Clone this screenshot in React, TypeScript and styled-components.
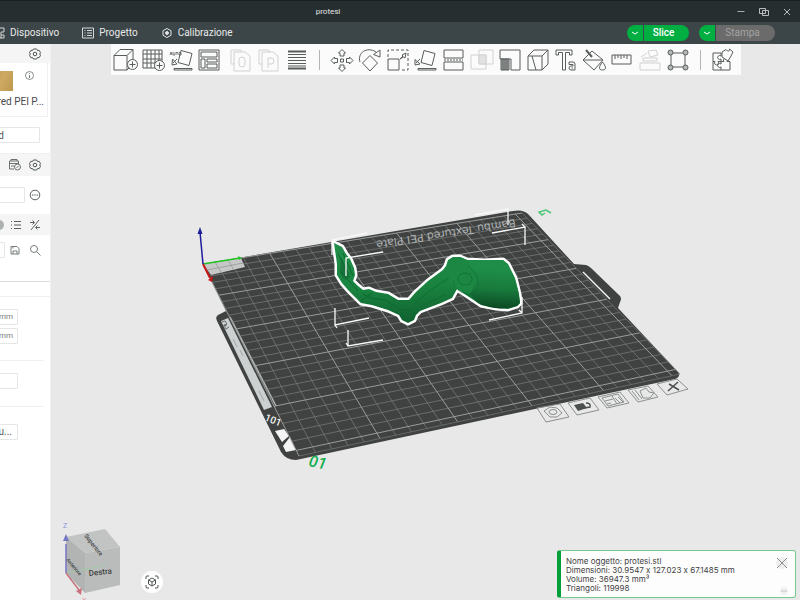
import React from "react";
import styled, { createGlobalStyle } from "styled-components";

const GlobalStyle = createGlobalStyle`
  *, *::before, *::after { box-sizing: border-box; }
  html, body, #root { height: 100%; margin: 0; }
  body { font-family: Roboto, "Noto Sans", sans-serif; font-size: 10px; background: #e8e8e8; overflow: hidden; }
  button, input { font: inherit; color: inherit; }
`;

/* ---------- window chrome ---------- */

const Window = styled.div`
  display: flex;
  flex-direction: column;
  height: 100%;
`;

const TitleBar = styled.header`
  display: flex;
  align-items: center;
  height: 22px;
  background: #262e30;
  border-top: 1px solid #1a2022;
  color: #e4e6e6;
`;

const WindowTitle = styled.h1`
  flex: 1;
  margin: 0;
  font-size: 8px;
  font-weight: 400;
  line-height: 10px;
  text-align: center;
`;

const WindowControls = styled.div`
  display: flex;
  justify-content: flex-end;
  width: 144px;
  padding-right: 2px;
`;

const PlainButton = styled.button<{ $w: number; $faded?: boolean }>`
  display: flex;
  align-items: center;
  justify-content: center;
  flex: none;
  width: ${(p) => p.$w}px;
  padding: 0;
  border: 0;
  background: none;
  opacity: ${(p) => (p.$faded ? 0.25 : 1)};
`;

const TabBar = styled.div`
  display: flex;
  align-items: center;
  justify-content: space-between;
  height: 22px;
  background: #3c4547;
  color: #e8eaea;
`;

const Tabs = styled.nav`
  display: flex;
  gap: 23px;
  margin-left: -7px;
`;

const Tab = styled.button`
  display: flex;
  align-items: center;
  gap: 5px;
  padding: 0;
  border: 0;
  background: none;
  font-size: 10px;
  line-height: 14px;
  white-space: nowrap;
`;

const Actions = styled.div`
  display: flex;
  gap: 10px;
  padding-right: 25px;
`;

const SplitButton = styled.div`
  display: flex;
  gap: 1px;
  height: 16px;
`;

const SplitArrow = styled.button`
  display: flex;
  align-items: center;
  justify-content: center;
  width: 16px;
  padding: 0;
  border: 0;
  border-radius: 8px 0 0 8px;
  background: #00ae42;
`;

const SplitMain = styled.button<{ $disabledLook?: boolean }>`
  width: ${(p) => (p.$disabledLook ? 59 : 45)}px;
  padding: 0 6px 0 0;
  border: 0;
  border-radius: 0 8px 8px 0;
  background: ${(p) => (p.$disabledLook ? "#6b6b6b" : "#00ae42")};
  color: ${(p) => (p.$disabledLook ? "#a5a5a5" : "#ffffff")};
  font-size: 10px;
  font-weight: ${(p) => (p.$disabledLook ? 400 : 500)};
  line-height: 16px;
`;

const Body = styled.div`
  display: flex;
  flex: 1;
  min-height: 0;
`;

/* ---------- sidebar ---------- */

const Sidebar = styled.aside`
  display: flex;
  flex-direction: column;
  flex: none;
  width: 51px;
  overflow: hidden;
  background: #ffffff;
  border-right: 1px solid #f1f1f1;
  color: #4a4a4a;
`;

const SectionHead = styled.div<{ $h: number }>`
  display: flex;
  align-items: center;
  justify-content: flex-end;
  flex: none;
  height: ${(p) => p.$h}px;
  padding-right: 5px;
  background: #f5f5f5;
`;

const PlateCard = styled.section`
  display: flex;
  flex-direction: column;
  align-items: flex-end;
  flex: none;
  height: 54px;
  margin-right: 2px;
  padding: 8px 3px 0 0;
  border-right: 1px solid #f0f0f0;
  border-bottom: 1px solid #f0f0f0;
`;

const PlateTop = styled.div`
  display: flex;
  align-items: flex-start;
  gap: 12px;
  height: 21px;
  padding-right: 10px;
`;

const PlateSwatch = styled.div`
  width: 30px;
  height: 20px;
  background: linear-gradient(115deg, #b9954c, #cda961 60%, #bd984f);
`;

const PlateName = styled.div`
  margin-top: 3px;
  font-size: 10px;
  line-height: 14px;
  white-space: nowrap;
`;

const Row = styled.div<{ $h: number; $right: number; $line?: string }>`
  display: flex;
  align-items: center;
  justify-content: flex-end;
  flex: none;
  height: ${(p) => p.$h}px;
  padding-right: ${(p) => p.$right}px;
  border-bottom: ${(p) => (p.$line ? `1px solid ${p.$line}` : "0")};
`;

const Field = styled.label`
  display: flex;
  align-items: center;
  justify-content: flex-end;
  flex: none;
  width: 120px;
  height: 16px;
  padding-right: 4px;
  border: 1px solid #e6e6e6;
  border-radius: 1px;
  background: #ffffff;
  color: #7a7a7a;
  font-size: 8px;
`;

const FieldInput = styled.input<{ $end?: number }>`
  flex: 1;
  min-width: 0;
  height: 12px;
  padding: 0 ${(p) => p.$end ?? 0}px 0 0;
  border: 0;
  outline: 0;
  background: none;
  color: #555555;
  font-size: 10px;
  text-align: right;
`;

const Rule = styled.hr`
  flex: none;
  width: auto;
  height: 1px;
  margin: 0 6px 0 0;
  border: 0;
  background: #f0f0f0;
`;

const FieldStack = styled.div<{ $h: number }>`
  display: flex;
  flex-direction: column;
  align-items: flex-end;
  justify-content: center;
  gap: 3px;
  flex: none;
  height: ${(p) => p.$h}px;
  padding: 0 32px 5px 0;
`;

/* ---------- 3D view ---------- */

const View = styled.main`
  position: relative;
  flex: 1;
  min-width: 0;
  background: #e8e8e8;
`;

const Scene = styled.svg`
  display: block;
  width: 100%;
  height: 100%;
`;

const Toolbar = styled.div`
  position: absolute;
  top: 0;
  left: 50%;
  transform: translateX(-50%);
  display: flex;
  align-items: center;
  height: 31px;
  padding: 0 4px 0 0;
  background: #fbfbfb;
`;

const ToolGroup = styled.div<{ $before?: number }>`
  display: flex;
  margin-left: ${(p) => p.$before ?? 0}px;
`;

const Separator = styled.span`
  width: 1px;
  height: 20px;
  margin: 0 8px;
  background: #b2b5b5;
`;

const CornerButton = styled.button`
  position: absolute;
  left: 90px;
  bottom: 7px;
  display: flex;
  align-items: center;
  justify-content: center;
  width: 22px;
  height: 22px;
  padding: 0;
  border: 0;
  border-radius: 11px;
  background: #ffffff;
`;

const Notice = styled.section`
  position: absolute;
  right: 4px;
  bottom: 2px;
  display: flex;
  justify-content: space-between;
  width: 239px;
  height: 48px;
  padding: 6px 7px 2px 5px;
  border: 1px solid #74c98c;
  border-left: 4px solid #009f38;
  border-radius: 3px;
  background: #fdfdfd;
  color: #3f3f3f;
  font-family: Inter, "Noto Sans", sans-serif;
  font-feature-settings: "calt" 0;
  font-size: 8px;
  line-height: 9px;
`;

const NoticeText = styled.p`
  margin: 0;
  white-space: nowrap;
`;

const NoticeTools = styled.div`
  display: flex;
  flex-direction: column;
  justify-content: space-between;
  align-items: flex-end;
`;

/* ---------- small icons ---------- */

type IconProps = { size?: number; color?: string; children: React.ReactNode };

const Icon = ({ size = 12, color = "#5a5f5f", children }: IconProps) => (
  <svg width={size} height={size} viewBox={`0 0 ${size} ${size}`} fill="none" stroke={color} strokeWidth={1} aria-hidden="true">
    {children}
  </svg>
);

const Gear = () => (
  <Icon color="#4f5656">
    <path d="M4.400 1h3.200l.8 1.400h1.800l1.300 2.300-.8 1.300.8 1.300-1.300 2.300H8.400L7.600 11H4.400l-.8-1.400H1.800L.5 7.300 1.300 6 .5 4.700l1.300-2.300h1.800z" />
    <circle cx="6" cy="6" r="1.800" />
  </Icon>
);

/* ---------- toolbar icons, drawn on a 28 x 28 field ---------- */

const tools: Record<string, React.ReactNode> = {
  add: <><path d="M3 9.500h13V24H3zM3 9.500l6-6h13l-6 6M22 3.500V14M16 24l2-2" /><circle cx="21.500" cy="18.500" r="5" fill="#fbfbfb" /><path d="M21.500 15.500v6M18.500 18.500h6" /></>,
  addPlate: <><path d="M4 4h19v18H4zM8 4v18M12 4v18M16 4v18M20 4v18M4 8h19M4 13h19M4 17h19" /><circle cx="20.500" cy="19.500" r="5" fill="#fbfbfb" /><path d="M20.500 16.500v6M17.500 19.500h6" /></>,
  autoOrient: <><path d="m14 4.500 11 3-3 12-11-3zM7 22.500h18v1.500H7zM10 13l-4 4m-.5-4L5 19l5-1z" /><path d="M3 9l1-3 1 3m1-3v3h2V6m1 .5h2m-1 0v2.500m2-2.500h2V9h-2z" strokeWidth="0.800" /></>,
  arrange: <><path d="M4 4h20v20H4zM6 6h16v5H6zM6 13h4v9H6zM12 13h10v3H12zM12 18h10v4H12z" /></>,
  pageO: <><path d="M8 18H4V4h10v2M7 6h11l5 4v15H7z" /><rect x="12" y="11" width="6" height="10" rx="3" /></>,
  pageP: <><path d="M8 18H4V4h10v2M7 6h11l5 4v15H7z" /><path d="M13 22V12h3a2.500 2.500 0 0 1 0 6h-3" /></>,
  layers: <><path d="M5 5.500h18M5 22.500h18" strokeWidth="2" /><path d="M5 8.500h18M5 11.500h18M5 14.500h18M5 17.500h18M5 20h18" strokeWidth="1.200" /></>,
  move: <><path d="M12.500 13h3v3h-3zM14 3.500l3.500 3.500H16v3h-4V7h-1.500zM14 25.500l3.500-3.500H16v-3h-4v3h-1.500zM3 14.500 6.500 11v1.500h3v4h-3V18zM25 14.500 21.500 11v1.500h-3v4h3V18z" /></>,
  rotate: <><path d="m14 9.500 7.500 7.500-7.500 8-7.500-8zM4 16C1 7 11 0 20 6M17.500 8.500 24 11V4z" /></>,
  scale: <><path d="M4 13h11v11H4z" /><path d="M4 11V4h20v20h-7" strokeDasharray="3 2" /><path d="m16 13 3-3-1-1 4-2-1 5-1.500-1z" /></>,
  layFace: <><path d="m12 4.500 11 3-3 12-11-3zM6 22.500h18v1.500H6zM8 13l-4 4m-1-3.500L3 19l5-1z" /></>,
  cut: <><path d="M4 4h19v8H4zM4 16h19v8H4z" /><path d="M4 14h19" strokeDasharray="2 1" /></>,
  boolean: <><path d="M3 9h15v14H3zM11 4h14v14H11z" /><path d="M11 9h7v9h-7z" fill="#9a9c9c" /></>,
  support: <><path d="M4 4h20v20h-9V13H4z" /><path d="M5 13h8v11H5z" fill="#a1a4a4" /><path d="M7 13v11M9 13v11M11 13v11" /></>,
  seam: <><path d="M4 10h14v14H4zM4 10l6-6h14v14l-6 6M18 10l6-6M8 10l4 14" /></>,
  text: <><path d="M4 4h16v5h-2.500V6.500h-4V24h-3V6.500h-4V9H4zM17 16h4q2 0 2 2v6h-4q-2 0-2-2t2-2h2v-1.500h-4z" /><path d="M19.500 22h1.500" /></>,
  paint: <><path d="m12 5 11 9-9 10L3 14zM3 14h20" /><path d="m6 4 6 7" strokeWidth="2" /><path d="M22.500 16c-4 5-4 8 0 8s4-3 0-8z" fill="#fbfbfb" /></>,
  measure: <><path d="M4 9h19v9H4zM7 9v4M10 9v3M13 9v4M16 9v3M19 9v4" /></>,
  assemble: <><path d="M4 17h20v7H4zM7 12h14v3H7zM12 5l8-1 2 5-8 2zM5 11l6-4" /></>,
  bounds: <><path d="M7 7h14v14H7z" />{[[6.5, 6.5], [21.5, 6.5], [6.5, 21.5], [21.5, 21.5]].map(([x, y]) => <circle key={`${x}-${y}`} cx={x} cy={y} r="2.500" fill="#b4b7b7" />)}</>,
  puzzle: <><path d="M4 7h8v3a2 2 0 1 0 0 3v2.500H9a2 2 0 1 1-3 0H4zM4 15.500V24h8v-3a2 2 0 1 1 0-3v-2.500M12 24h9v-8.500h-3a2 2 0 1 0-3 0h-3" /><path d="m13 6 4-2.500 1.500 1.500a1.500 1.500 0 0 0 2-2L24 6l-2 4-3 5-6-4z" fill="#fbfbfb" /></>,
};

const Tool = ({ id, label, faded }: { id: string; label: string; faded?: boolean }) => (
  <PlainButton $w={28} $faded={faded} aria-label={label}>
    <Icon size={28} color="#585d5d">{tools[id]}</Icon>
  </PlainButton>
);

/* ---------- build plate projection ---------- */

type Pt = [number, number];
const P = 256;
const corners: Pt[] = [[203, 264], [522, 213], [680, 374], [299, 456]];

/** Maps plate millimetres (u to the right, v to the front) to scene coordinates. */
function project(mmU: number, mmV: number): Pt {
  const [[x0, y0], [x1, y1], [x2, y2], [x3, y3]] = corners;
  const dx1 = x1 - x2, dx2 = x3 - x2, sx = x0 - x1 + x2 - x3;
  const dy1 = y1 - y2, dy2 = y3 - y2, sy = y0 - y1 + y2 - y3;
  const det = dx1 * dy2 - dx2 * dy1;
  const g = (sx * dy2 - dx2 * sy) / det;
  const h = (dx1 * sy - sx * dy1) / det;
  const u = mmU / P, v = mmV / P;
  const k = g * u + h * v + 1;
  return [
    ((x1 - x0 + g * x1) * u + (x3 - x0 + h * x3) * v + x0) / k,
    ((y1 - y0 + g * y1) * u + (y3 - y0 + h * y3) * v + y0) / k,
  ];
}

const segment = (a: Pt, b: Pt) => `M${a[0].toFixed(2)} ${a[1].toFixed(2)}L${b[0].toFixed(2)} ${b[1].toFixed(2)}`;

const gridPath = (major: boolean) => {
  const out: string[] = [];
  for (let t = 0; t <= 250; t += 10) {
    if ((t % 50 === 0) !== major) continue;
    out.push(segment(project(t, 0), project(t, P)), segment(project(0, t), project(P, t)));
  }
  return out.join("");
};

const ARM =
  "M334 243L342 247L346 254L350 259L354 268L355 275L353 281L358 286L363 290L369 289L376 292L388 294L398 300L409 300L416 292L428 281L443 270L446 266L448 260L453 257L460 257L467 260L484 261L503 260L508 264L515 278L519 294L520 303L517 306L508 309L496 308L481 305L469 297L457 289L452 298L441 303L420 311L416 315L414 320L408 323L402 320L399 315L388 310L372 305L361 303L356 298L349 291L342 283L337 275L337 264L336 257Z";

const PlateScene = () => (
  <Scene viewBox="51 44 749 556" preserveAspectRatio="xMidYMid meet" role="img" aria-label="protesi.stl">
    <defs>
      <linearGradient id="arm" x1="0" y1="0" x2="0.150" y2="1">
        <stop offset="0.150" stopColor="#1f8d48" />
        <stop offset="0.600" stopColor="#19833f" />
        <stop offset="1" stopColor="#126331" />
      </linearGradient>
      <linearGradient id="socket" x1="0.500" y1="0" x2="0.450" y2="1">
        <stop offset="0.200" stopColor="#1e8d48" />
        <stop offset="0.600" stopColor="#187a3c" />
        <stop offset="1" stopColor="#0b4722" />
      </linearGradient>
    </defs>

    {/* plate body with its two handles */}
    <path
      fill="#3f4241"
      d="M203 264L513 211Q524 209 529 215L574 264L586 265Q589 266 591 268L620 296Q622 299 620 302L618 308L678 372Q681 377 675 379L296 460Q286 460 281 452L217 321Q215 317 218 315L226 311Z"
    />
    <path d="M583 272L610 299" stroke="#f3f3f3" strokeWidth="1.500" />
    <path d="M221 321L228 318L272 407L264 410Z" fill="#cdd0d0" />
    <path d="M230 317L276 406" stroke="#b5b8b8" strokeWidth="1.500" />
    <path d="M233 339l4 8m3 3 3 6M259 391l5 10" stroke="#a4a7a7" strokeWidth="1" fill="none" />
    <path d="M222 322l3-1 2 3-3 1 2 4 3-2M223 326l4-1" stroke="#6b6e6e" fill="none" />
    <text x="264" y="420" transform="rotate(22 264 420)" fill="#f2f2f2" fontSize="10" fontWeight="500">101</text>
    <path d="M275 431L284 429L289 436L282 442ZM283 446L290 437L296 450L286 452Z" fill="#f4f4f4" />

    {/* grid */}
    <path d={gridPath(false)} stroke="#7b7e7d" strokeWidth="0.700" />
    <path d={gridPath(true)} stroke="#999c9b" strokeWidth="1" />
    <path d={segment(project(0, P), project(P, P)) + segment(project(P, 0), project(P, P))} stroke="#767978" strokeWidth="0.700" />
    <path d="M203 264L241 258L245 267L211 275Z" fill="#c6c8c8" />
    <path d="M207 270L243 263M215 262L221 272M228 260L234 270" stroke="#a0a3a3" />

    {/* lettering along the far edge, seen from behind */}
    <text x="515" y="219" transform="rotate(171 515 219)" fill="#aeb1b1" fontSize="11" fontFamily='"DejaVu Sans", sans-serif'>
      Bambu Textured PEI Plate
    </text>

    {/* origin axes */}
    <path d="M203 264L240 258" stroke="#21c321" strokeWidth="1.500" />
    <path d="M238 256L242 258L239 260Z" fill="#21c321" />
    <path d="M203 264L210 278" stroke="#c81616" strokeWidth="2" />
    <path d="M208 280L213 276L212 282Z" fill="#c81616" />
    <path d="M203 264L200 232" stroke="#1c1c9c" strokeWidth="1.500" />
    <path d="M197.500 234L200 227L202.500 234Z" fill="#1c1c9c" />

    {/* model */}
    <path d={ARM} fill="url(#arm)" stroke="#ffffff" strokeWidth="5" strokeLinejoin="round" />
    <path d={ARM} fill="url(#arm)" />
    <path d="M467 260L503 260Q517 274 520 303L517 306Q496 312 478 303L465 290Q472 281 467 260Z" fill="url(#socket)" />
    <path d="M448 262L453 257L460 257L467 260L478 279L470 294L457 289L448 281Z" fill="#1c8743" />
    <g fill="none" stroke="#0c6930" strokeWidth="1">
      <ellipse cx="465" cy="279" rx="7" ry="6" strokeOpacity="0.700" />
      <path d="M453 281Q455 292 467 294T478 281Q477 272 468 266" strokeOpacity="0.500" />
      <path d="M363 294L371 298L385 300L401 310M372 293L361 301M338 254L349 274M343 253L353 276M341 272L358 291" />
      <ellipse cx="408" cy="315" rx="6" ry="5" />
      <path d="M414 304L432 289L449 278M420 307L446 294M402 309L412 311" strokeOpacity="0.700" />
    </g>
    <path d="M341 257L350 277L345 280L340 273Z" fill="#106231" opacity="0.600" />

    {/* selection brackets */}
    <path
      fill="none"
      stroke="#f8f8f8"
      strokeWidth="1.300"
      d="M332 255V240L367 233M383 252L346 258V276M335 308V325L369 318M348 330V346L383 340M335 325l2 3M348 346l-2-3M475 215L508 209V225M492 233L525 227V245M525 227l-3-3M489 320L522 313V297M522 313l-3-3"
    />

    {/* plate number and edit mark */}
    <text x="308" y="466" transform="rotate(12 308 466)" fill="#12ad4d" fontSize="16" fontWeight="500" fontStyle="italic">
      01
    </text>
    <path d="M551 213L546 210L539 212L542 215L545 213" fill="none" stroke="#4bc676" strokeWidth="1.500" />

    {/* plate actions */}
    <g fill="none" stroke="#8d9090" strokeWidth="1">
      <path d="M537 408L560 404L569 417L546 422ZM568 403L590 398L599 410L577 415ZM598 397L620 392L629 403L607 408ZM628 390L648 386L658 397L638 402ZM657 384L677 379L688 389L667 395Z" />
      <path d="M544 411L550 407L557 408L562 413L557 417L550 417Z" />
      <ellipse cx="553" cy="412" rx="4" ry="2.500" />
      <path d="M602 398L618 394L624 402L608 406ZM605 401L613 399M607 404L611 403M612 396L617 404M615 398L620 403M618 397L623 402" />
      <path d="M632 391L639 400M635 390L642 399M640 391L646 388L649 392L654 393L650 398L643 398Z" />
    </g>
    <path d="M574 405L583 403L587 408L578 411Z" fill="#4c4f4f" />
    <path d="M584 408L590 407Q591 403 586 403M669 384L679 390M678 382L668 391" fill="none" stroke="#4c4f4f" strokeWidth="1.500" />

    {/* orientation cube */}
    <path d="M66 537L105 529L120 547L85 553Z" fill="#c1c4c3" />
    <path d="M66 537L85 553V593L66 573Z" fill="#b1b4b3" />
    <path d="M85 553L120 547V585L85 593Z" fill="#b9bcbb" />
    <path d="M66 573L107 565" stroke="#a3c9a8" />
    <path d="M66 573V544" stroke="#7476c6" strokeWidth="1.500" />
    <path d="M63 541L66 534L69 541Z" fill="#7476c6" />
    <path d="M66 573L79 590" stroke="#c9727d" strokeWidth="1.500" />
    <path d="M76 591L82 588L81 595Z" fill="#c9727d" />
    <g fill="#3e4141">
      <text x="89" y="576" fontSize="8" fontWeight="500" transform="rotate(-6 89 576)">Destra</text>
      <text x="84" y="536" fontSize="6" fontWeight="500" transform="rotate(52 84 536)">Superiore</text>
      <text x="66" y="560" fontSize="5" fontWeight="500" transform="rotate(50 66 560)">Anteriore</text>
      <text x="63" y="528" fontSize="7" fill="#8e8fe0">Z</text>
      <text x="82" y="603" fontSize="7" fill="#dd8c98">X</text>
    </g>
  </Scene>
);

export default function App() {
  return (
    <>
      <GlobalStyle />
      <Window>
        <TitleBar>
          <WindowTitle>protesi</WindowTitle>
          <WindowControls>
            <PlainButton $w={23} aria-label="Riduci a icona">
              <Icon color="#a9adad"><path d="M2.500 5.500h7" /></Icon>
            </PlainButton>
            <PlainButton $w={23} aria-label="Ripristina">
              <Icon color="#b9bdbd"><path d="M1.500 2.500h6v5h-6zM4.500 4.500h6v5h-6z" /></Icon>
            </PlainButton>
            <PlainButton $w={23} aria-label="Chiudi">
              <Icon color="#b9bdbd"><path d="m3 3 6 6M9 3 3 9" /></Icon>
            </PlainButton>
          </WindowControls>
        </TitleBar>

        <TabBar>
          <Tabs>
            <Tab>
              <Icon color="#d5d8d8"><path d="M1 1h10v4H8v3h3v3H1zM8 8v3" /></Icon>
              Dispositivo
            </Tab>
            <Tab>
              <Icon color="#d5d8d8"><path d="M.5 1h11v10H.5zM2.500 3.500h1M5 3.500h5M2.500 6h1M5 6h5M2.500 8.500h1M5 8.500h5" /></Icon>
              Progetto
            </Tab>
            <Tab>
              <Icon color="#e2e4e4"><path d="m6 1.500 4 2.200v4.600l-4 2.200-4-2.200V3.700z" /><circle cx="6" cy="6" r="1.500" fill="#e2e4e4" /></Icon>
              Calibrazione
            </Tab>
          </Tabs>
          <Actions>
            <SplitButton>
              <SplitArrow aria-label="Opzioni slice"><Icon size={8} color="#ffffff"><path d="m1 3 3 2 3-2" /></Icon></SplitArrow>
              <SplitMain>Slice</SplitMain>
            </SplitButton>
            <SplitButton>
              <SplitArrow aria-label="Opzioni stampa"><Icon size={8} color="#ffffff"><path d="m1 3 3 2 3-2" /></Icon></SplitArrow>
              <SplitMain $disabledLook>Stampa</SplitMain>
            </SplitButton>
          </Actions>
        </TabBar>

        <Body>
          <Sidebar>
            <SectionHead $h={19}>
              <PlainButton $w={20} aria-label="Impostazioni stampante"><Gear /></PlainButton>
            </SectionHead>
            <PlateCard>
              <PlateTop>
                <PlateSwatch />
                <PlainButton $w={9} aria-label="Informazioni piatto">
                  <Icon size={9}><circle cx="4.500" cy="4.500" r="4" strokeWidth="0.700" /><path d="M4.500 4v3M4.500 2v1" strokeWidth="0.800" /></Icon>
                </PlainButton>
              </PlateTop>
              <PlateName>Textured PEI P...</PlateName>
            </PlateCard>
            <Row $h={37} $right={10} $line="#f0f0f0">
              <Field><FieldInput $end={31} aria-label="Ugello" defaultValue="Standard" /></Field>
            </Row>
            <SectionHead $h={22}>
              <PlainButton $w={20} aria-label="Filamenti">
                <Icon color="#6a6f6f"><path d="M.5 2h9v3M.5 2v8H5M.5 4.500h9M2 7h3M2 2V.5h6V2" /><circle cx="8.500" cy="8" r="3" /><path d="m7.500 9 2-2" /></Icon>
              </PlainButton>
              <PlainButton $w={20} aria-label="Impostazioni filamenti"><Gear /></PlainButton>
            </SectionHead>
            <Row $h={38} $right={5}>
              <Field><FieldInput aria-label="Filamento" defaultValue="" /></Field>
              <PlainButton $w={20} aria-label="Altro">
                <Icon><circle cx="6" cy="6" r="4.800" /><path d="M3 6h1.500M5.300 6h1.400M7.500 6H9" /></Icon>
              </PlainButton>
            </Row>
            <SectionHead $h={21}>
              <PlainButton $w={14} aria-label="Globale"><Icon size={10}><circle cx="4" cy="5" r="5" fill="#aeb1b1" stroke="none" /></Icon></PlainButton>
              <PlainButton $w={18} aria-label="Elenco">
                <Icon><path d="M1 2.500h1M1 6h1M1 9.500h1M4 2.500h7M4 6h7M4 9.500h7" /></Icon>
              </PlainButton>
              <PlainButton $w={20} aria-label="Confronta">
                <Icon><path d="M10 1 2 11M1 3.500h4M3.500 1.500l2 2-2 2M11 8.500H7M8.500 6.500l-2 2 2 2" /></Icon>
              </PlainButton>
            </SectionHead>
            <Row $h={30} $right={5}>
              <Field><FieldInput aria-label="Processo" defaultValue="" /></Field>
              <PlainButton $w={20} aria-label="Salva">
                <Icon color="#777c7c"><path d="M2 2.500h6l2 2V10H2zM4 10V7h4v3M4 2.500v2" /></Icon>
              </PlainButton>
              <PlainButton $w={20} aria-label="Cerca">
                <Icon color="#777c7c"><circle cx="5" cy="5" r="3.500" /><path d="m7.500 7.500 4 4" /></Icon>
              </PlainButton>
            </Row>
            <Row $h={17} $right={0} $line="#dcdcdc" />
            <Row $h={15} $right={0} $line="#f0f0f0" />
            <FieldStack $h={63}>
              <Field><FieldInput aria-label="Altezza strato" defaultValue="" />mm</Field>
              <Field><FieldInput aria-label="Altezza primo strato" defaultValue="" />mm</Field>
            </FieldStack>
            <Rule />
            <FieldStack $h={45}>
              <Field><FieldInput aria-label="Pareti" defaultValue="" /></Field>
            </FieldStack>
            <Rule />
            <FieldStack $h={54}>
              <Field><FieldInput $end={1} aria-label="Supporti" defaultValue="Albero (au..." /></Field>
            </FieldStack>
          </Sidebar>

          <View>
            <PlateScene />
            <Toolbar role="toolbar" aria-label="Strumenti">
              <ToolGroup>
                <Tool id="add" label="Aggiungi" />
                <Tool id="addPlate" label="Aggiungi piatto" />
                <Tool id="autoOrient" label="Orientamento automatico" />
                <Tool id="arrange" label="Disponi" />
              </ToolGroup>
              <ToolGroup $before={4}>
                <Tool id="pageO" label="Dividi in oggetti" faded />
                <Tool id="pageP" label="Dividi in parti" faded />
                <Tool id="layers" label="Altezza strato variabile" />
              </ToolGroup>
              <Separator />
              <ToolGroup>
                <Tool id="move" label="Sposta" />
                <Tool id="rotate" label="Ruota" />
                <Tool id="scale" label="Scala" />
                <Tool id="layFace" label="Posiziona su faccia" />
                <Tool id="cut" label="Taglia" />
                <Tool id="boolean" label="Booleana" faded />
                <Tool id="support" label="Supporti" />
                <Tool id="seam" label="Giunzione" />
                <Tool id="text" label="Testo" />
                <Tool id="paint" label="Colora" />
                <Tool id="measure" label="Misura" />
                <Tool id="assemble" label="Assembla" faded />
                <Tool id="bounds" label="Orecchie" />
              </ToolGroup>
              <Separator />
              <ToolGroup>
                <Tool id="puzzle" label="Vista assemblaggio" />
              </ToolGroup>
            </Toolbar>

            <CornerButton aria-label="Centra vista">
              <Icon size={16} color="#4c5151">
                <path d="M2 5V3q0-1 1-1h2M11 2h2q1 0 1 1v2M14 11v2q0 1-1 1h-2M5 14H3q-1 0-1-1v-2" />
                <path d="m8 4 3.500 2v4L8 12l-3.500-2V6zM4.500 6 8 8l3.500-2M8 8v4" />
              </Icon>
            </CornerButton>

            <Notice>
              <NoticeText>
                Nome oggetto: protesi.stl<br />
                Dimensioni: 30.9547 x 127.023 x 67.1485 mm<br />
                Volume: 36947.3 mm³<br />
                Triangoli: 119998
              </NoticeText>
              <NoticeTools>
                <PlainButton $w={12} aria-label="Chiudi avviso">
                  <Icon color="#8c8f8f"><circle cx="6" cy="6" r="6" fill="#eeeeee" stroke="none" /><path d="m1 1 10 10M11 1 1 11" /></Icon>
                </PlainButton>
                <PlainButton $w={8} aria-label="Riduci avviso">
                  <Icon size={8} color="#c4c6c6"><circle cx="4" cy="4" r="4" fill="#f1f1f1" stroke="none" /><path d="M1 4h6" /></Icon>
                </PlainButton>
              </NoticeTools>
            </Notice>
          </View>
        </Body>
      </Window>
    </>
  );
}
